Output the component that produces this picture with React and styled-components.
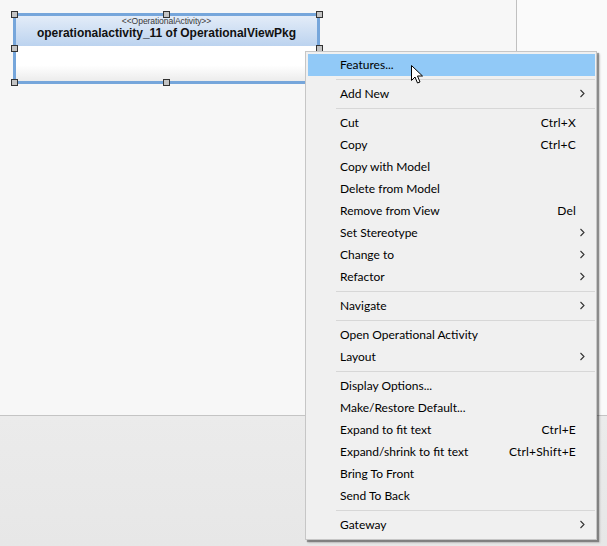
import React from "react";
import styled, { createGlobalStyle } from "styled-components";

const Global = createGlobalStyle`
  html, body { margin: 0; padding: 0; }
  body { width: 607px; height: 546px; overflow: hidden; background: #f0f0f0; font-family: "Lato", "Liberation Sans", sans-serif; }
  #root { width: 607px; height: 546px; }
`;

const Page = styled.div`
  position: relative;
  width: 607px;
  height: 546px;
  display: flex;
  flex-direction: column;
  overflow: hidden;
`;

const TopArea = styled.div`
  display: flex;
  height: 415px;
  border-bottom: 1px solid #c4c4c4;
`;

const Canvas = styled.div`
  position: relative;
  width: 516px;
  background: #f7f7f7;
  border-right: 1px solid #c0c0c0;
`;

const SidePane = styled.div`
  flex: 1;
  background: #fafafa;
`;

const BottomArea = styled.div`
  flex: 1;
  background: linear-gradient(#ebebeb, #e7e7e7);
`;

const Node = styled.div`
  position: absolute;
  left: 13px;
  top: 13px;
  width: 301px;
  height: 65px;
  border: 3px solid #76a6db;
  display: flex;
  flex-direction: column;
`;

const NodeHeader = styled.div`
  height: 30px;
  background: linear-gradient(#e3ecf8, #bcd3ef);
  display: flex;
  flex-direction: column;
  align-items: center;
  padding-top: 1px;
  box-sizing: border-box;
`;

const Stereotype = styled.div`
  font-family: "Liberation Sans", sans-serif;
  font-size: 8.6px;
  line-height: 9px;
  color: #3a3a3a;
  letter-spacing: -0.1px;
`;

const NodeTitle = styled.div`
  font-family: "Liberation Sans", sans-serif;
  font-weight: bold;
  font-size: 12px;
  line-height: 14px;
  color: #111;
`;

const NodeBody = styled.div`
  flex: 1;
  background: linear-gradient(#ffffff 55%, #ececec);
`;

const Handle = styled.div`
  position: absolute;
  width: 5px;
  height: 5px;
  background: #c4c4c4;
  border: 1px solid #333;
  left: ${(p) => p.x - 3}px;
  top: ${(p) => p.y - 3}px;
`;

const Menu = styled.div`
  position: absolute;
  left: 305px;
  top: 51px;
  width: 287px;
  padding: 2px 1px 3px 2px;
  background: #f0f0f0;
  border: 1px solid #c6c6c6;
  box-shadow: 2px 2px 1px rgba(0, 0, 0, 0.35), 3px 3px 2px rgba(0, 0, 0, 0.15);
  display: flex;
  flex-direction: column;
  font-family: "Lato", "Liberation Sans", sans-serif;
  font-size: 12px;
  color: #000;
`;

const Item = styled.div`
  height: 22px;
  box-sizing: border-box;
  padding-bottom: 1px;
  display: flex;
  align-items: center;
  padding-left: 32px;
  padding-right: 19px;
  background: ${(p) => (p.$active ? "#91c9f7" : "transparent")};
  position: relative;
`;

const Label = styled.span`
  flex: 1;
`;

const Shortcut = styled.span`
  letter-spacing: 0.2px;
`;

const Chevron = styled.span`
  position: absolute;
  right: 10px;
  top: 6px;
  width: 5px;
  height: 10px;
  display: flex;
`;

const Sep = styled.div`
  height: 7px;
  display: flex;
  align-items: center;
  padding-left: 28px;
  &::after {
    content: "";
    flex: 1;
    height: 1px;
    background: #d7d7d7;
  }
`;

const Cursor = styled.svg`
  position: absolute;
  left: 411px;
  top: 65px;
`;

const groups = [
  [{ label: "Features...", active: true }],
  [{ label: "Add New", sub: true }],
  [
    { label: "Cut", sc: "Ctrl+X" },
    { label: "Copy", sc: "Ctrl+C" },
    { label: "Copy with Model" },
    { label: "Delete from Model" },
    { label: "Remove from View", sc: "Del" },
    { label: "Set Stereotype", sub: true },
    { label: "Change to", sub: true },
    { label: "Refactor", sub: true },
  ],
  [{ label: "Navigate", sub: true }],
  [
    { label: "Open Operational Activity" },
    { label: "Layout", sub: true },
  ],
  [
    { label: "Display Options..." },
    { label: "Make/Restore Default..." },
    { label: "Expand to fit text", sc: "Ctrl+E" },
    { label: "Expand/shrink to fit text", sc: "Ctrl+Shift+E" },
    { label: "Bring To Front" },
    { label: "Send To Back" },
  ],
  [{ label: "Gateway", sub: true }],
];

const ChevronIcon = () => (
  <Chevron>
    <svg width="5" height="9" viewBox="0 0 5 9">
      <path d="M0.5 1 L4 4.5 L0.5 8" fill="none" stroke="#333" strokeWidth="1.1" />
    </svg>
  </Chevron>
);

export default function App() {
  const handles = [
    [14, 14], [166, 14], [319, 14],
    [14, 48], [319, 48],
    [14, 82], [166, 82],
  ];
  return (
    <Page>
      <Global />
      <TopArea>
        <Canvas>
          <Node>
            <NodeHeader>
              <Stereotype>&lt;&lt;OperationalActivity&gt;&gt;</Stereotype>
              <NodeTitle>operationalactivity_11 of OperationalViewPkg</NodeTitle>
            </NodeHeader>
            <NodeBody />
          </Node>
          {handles.map(([x, y], i) => (
            <Handle key={i} x={x} y={y} />
          ))}
        </Canvas>
        <SidePane />
      </TopArea>
      <BottomArea />
      <Menu>
        {groups.map((g, gi) => (
          <React.Fragment key={gi}>
            {gi > 0 && <Sep />}
            {g.map((it) => (
              <Item key={it.label} $active={it.active}>
                <Label>{it.label}</Label>
                {it.sc && <Shortcut>{it.sc}</Shortcut>}
                {it.sub && <ChevronIcon />}
              </Item>
            ))}
          </React.Fragment>
        ))}
      </Menu>
      <Cursor width="13" height="20" viewBox="0 0 13 20">
        <path
          d="M0.5 0.5 L0.5 15.5 L4 12 L6.5 18 L9 17 L6.5 11 L11.5 11 Z"
          fill="#fff"
          stroke="#000"
          strokeWidth="1"
          strokeLinejoin="miter"
        />
      </Cursor>
    </Page>
  );
}
